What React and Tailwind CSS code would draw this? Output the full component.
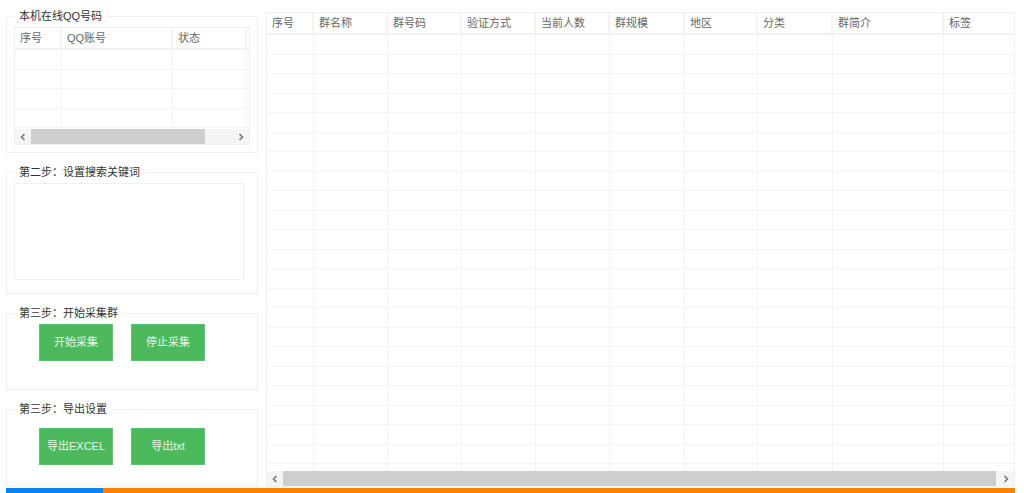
const font = { fontFamily: '"Liberation Sans", "Noto Sans CJK SC", sans-serif' };

const qqCols = [
  { label: '序号', w: 'w-[47px]' },
  { label: 'QQ账号', w: 'w-[111px]' },
  { label: '状态', w: 'w-[74px]' },
  { label: '', w: 'flex-1' },
];

const groupCols = [
  { label: '序号', w: 'w-[47px]' },
  { label: '群名称', w: 'w-[74px]' },
  { label: '群号码', w: 'w-[74px]' },
  { label: '验证方式', w: 'w-[74px]' },
  { label: '当前人数', w: 'w-[74px]' },
  { label: '群规模', w: 'w-[75px]' },
  { label: '地区', w: 'w-[73px]' },
  { label: '分类', w: 'w-[75px]' },
  { label: '群简介', w: 'w-[111px]' },
  { label: '标签', w: 'flex-1' },
];

function Chevron({ left }) {
  return (
    <svg width="8" height="8" viewBox="0 0 8 8" className="shrink-0">
      <path d={left ? 'M5.5 1 L2.5 4 L5.5 7' : 'M2.5 1 L5.5 4 L2.5 7'} fill="none" stroke="#777" strokeWidth="1.6" />
    </svg>
  );
}

function ScrollBar({ thumb }) {
  return (
    <div className="h-[15px] shrink-0 bg-[#f5f5f5] flex items-stretch">
      <div className="w-[16px] flex items-center justify-center shrink-0"><Chevron left /></div>
      <div className={`bg-[#cecece] ${thumb}`} />
      <div className="flex-1" />
      <div className="w-[16px] flex items-center justify-center shrink-0"><Chevron /></div>
    </div>
  );
}

function DataTable({ cols, rows }) {
  return (
    <div className="flex-1 min-h-0 overflow-hidden">
      <div className="flex h-[22px] border-b-2 border-[#f1f1f1]">
        {cols.map((c, i) => (
          <div key={i} className={`${c.w} shrink-0 pl-[5px] leading-[20px] text-[11px] text-[#666] border-r-2 border-[#f4f4f4] last:border-r-0`}>
            {c.label}
          </div>
        ))}
      </div>
      {Array.from({ length: rows }).map((_, r) => (
        <div key={r} className="flex h-[19.5px] border-b border-[#f3f3f3]">
          {cols.map((c, i) => (
            <div key={i} className={`${c.w} shrink-0 border-r border-[#f3f3f3] last:border-r-0`} />
          ))}
        </div>
      ))}
    </div>
  );
}

function Group({ title, className, children }) {
  return (
    <div className={`relative w-[252px] border border-[#f0f0f0] ${className}`}>
      <span className="absolute left-[7px] top-[-9px] bg-white px-[5px] text-[11px] leading-[16px] text-[#333] whitespace-nowrap">
        {title}
      </span>
      {children}
    </div>
  );
}

function GreenButton({ children }) {
  return (
    <button className="w-[74px] h-[37px] bg-[#4cba5c] border border-[#5cc56b] text-[11px] text-[#e6f6e8]">
      {children}
    </button>
  );
}

export default function App() {
  return (
    <div className="w-[1024px] h-[493px] overflow-hidden bg-white flex flex-col" style={font}>
      <div className="flex h-[488px] pl-[6px] pr-[9px] gap-[8px]">
        <div className="w-[252px] pt-[16px] flex flex-col gap-[19px] shrink-0">
          <Group title="本机在线QQ号码" className="h-[137px] pt-[10px] pl-[7px] pr-[7px]">
            <div className="h-[118px] border border-[#f0f0f0] flex flex-col">
              <DataTable cols={qqCols} rows={4} />
              <ScrollBar thumb="w-[174px]" />
            </div>
          </Group>
          <Group title="第二步：设置搜索关键词" className="h-[122px] pt-[10px] pl-[7px]">
            <div className="w-[230px] h-[97px] border border-[#f0f0f0]" />
          </Group>
          <Group title="第三步：开始采集群" className="h-[77px] pt-[10px] pl-[32px]">
            <div className="flex gap-[18px]">
              <GreenButton>开始采集</GreenButton>
              <GreenButton>停止采集</GreenButton>
            </div>
          </Group>
          <Group title="第三步：导出设置" className="h-[77px] pt-[18px] pl-[32px]">
            <div className="flex gap-[18px]">
              <GreenButton>导出EXCEL</GreenButton>
              <GreenButton>导出txt</GreenButton>
            </div>
          </Group>
        </div>
        <div className="flex-1 mt-[12px] mb-[1px] border border-[#f0f0f0] flex flex-col min-w-0">
          <DataTable cols={groupCols} rows={23} />
          <ScrollBar thumb="w-[713px]" />
        </div>
      </div>
      <div className="flex h-[5px] pl-[6px] pr-[9px]">
        <div className="w-[97px] bg-[#0a84f0]" />
        <div className="flex-1 bg-[#ff8000]" />
      </div>
    </div>
  );
}
